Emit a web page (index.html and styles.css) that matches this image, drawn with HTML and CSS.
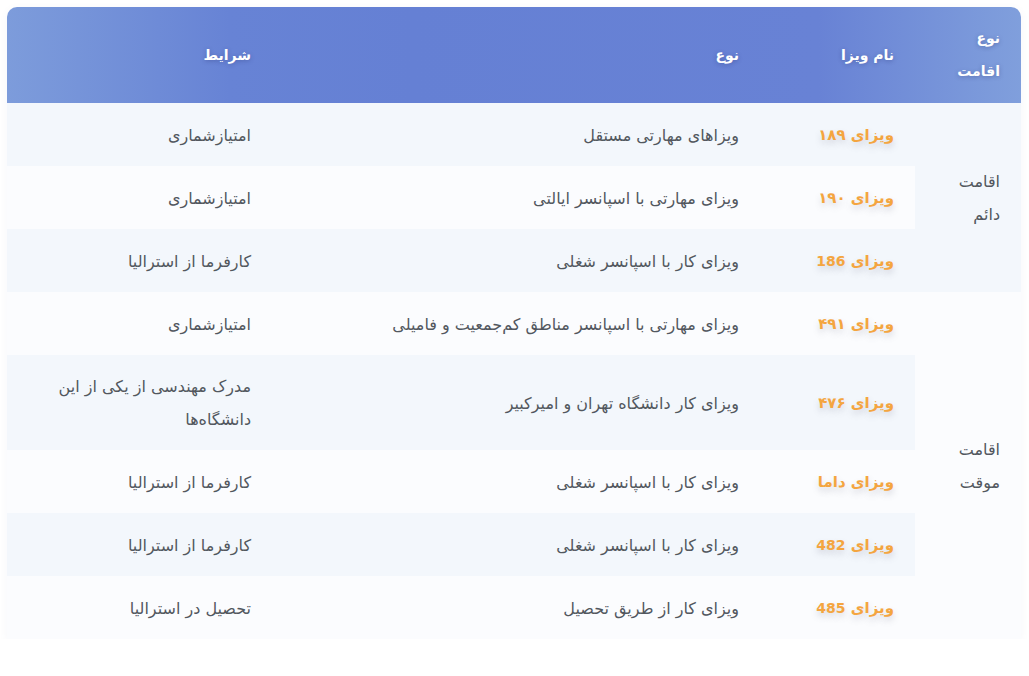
FILE: index.html
```html
<!DOCTYPE html>
<html lang="fa" dir="rtl">
<head>
<meta charset="utf-8">
<link rel="stylesheet" href="styles.css">
</head>
<body>
<div class="wrap">
<table class="visa-table">
  <thead>
    <tr>
      <th class="c-res">نوع اقامت</th>
      <th class="c-name">نام ویزا</th>
      <th class="c-type">نوع</th>
      <th class="c-cond">شرایط</th>
    </tr>
  </thead>
  <tbody>
    <tr class="odd">
      <td class="c-res group" rowspan="3">اقامت<br>دائم</td>
      <td class="c-name"><span class="visa">ویزای ۱۸۹</span></td>
      <td class="c-type">ویزاهای مهارتی مستقل</td>
      <td class="c-cond">امتیازشماری</td>
    </tr>
    <tr class="even">
      <td class="c-name"><span class="visa">ویزای ۱۹۰</span></td>
      <td class="c-type">ویزای مهارتی با اسپانسر ایالتی</td>
      <td class="c-cond">امتیازشماری</td>
    </tr>
    <tr class="odd">
      <td class="c-name"><span class="visa">ویزای <span class="lat">186</span></span></td>
      <td class="c-type">ویزای کار با اسپانسر شغلی</td>
      <td class="c-cond">کارفرما از استرالیا</td>
    </tr>
    <tr class="even">
      <td class="c-res group" rowspan="5">اقامت<br>موقت</td>
      <td class="c-name"><span class="visa">ویزای ۴۹۱</span></td>
      <td class="c-type">ویزای مهارتی با اسپانسر مناطق کم‌جمعیت و فامیلی</td>
      <td class="c-cond">امتیازشماری</td>
    </tr>
    <tr class="odd">
      <td class="c-name"><span class="visa">ویزای ۴۷۶</span></td>
      <td class="c-type">ویزای کار دانشگاه تهران و امیرکبیر</td>
      <td class="c-cond">مدرک مهندسی از یکی از این دانشگاه‌ها</td>
    </tr>
    <tr class="even">
      <td class="c-name"><span class="visa">ویزای داما</span></td>
      <td class="c-type">ویزای کار با اسپانسر شغلی</td>
      <td class="c-cond">کارفرما از استرالیا</td>
    </tr>
    <tr class="odd">
      <td class="c-name"><span class="visa">ویزای <span class="lat">482</span></span></td>
      <td class="c-type">ویزای کار با اسپانسر شغلی</td>
      <td class="c-cond">کارفرما از استرالیا</td>
    </tr>
    <tr class="even">
      <td class="c-name"><span class="visa">ویزای <span class="lat">485</span></span></td>
      <td class="c-type">ویزای کار از طریق تحصیل</td>
      <td class="c-cond">تحصیل در استرالیا</td>
    </tr>
  </tbody>
</table>
</div>
</body>
</html>
```

FILE: styles.css
```css
html, body {
  margin: 0;
  padding: 0;
  background: #ffffff;
}

body {
  font-family: "DejaVu Sans", "Noto Sans", sans-serif;
  direction: rtl;
}

.wrap {
  padding: 7px 8px 0 7px;
}

.visa-table {
  width: 1014px;
  border-collapse: separate;
  border-spacing: 0;
  table-layout: fixed;
  box-shadow: 0 2px 8px rgba(80, 100, 150, 0.06);
  border-radius: 10px 10px 0 0;
}

.visa-table th,
.visa-table td {
  text-align: right;
  vertical-align: middle;
  font-size: 16px;
  line-height: 33px;
  padding: 15px 21px 14px 21px;
}

.visa-table th {
  color: #ffffff;
  font-weight: bold;
  font-size: 14px;
  padding-top: 15px;
  padding-bottom: 15px;
  text-shadow: 0 1px 4px rgba(40, 50, 110, 0.35);
}

.visa-table thead tr {
  background: linear-gradient(to left, #809fdc 0%, #6882d5 20%, #6580d4 60%, #6783d5 78%, #7d9cdb 100%);
}

.visa-table thead th:first-child {
  border-top-right-radius: 10px;
}

.visa-table thead th:last-child {
  border-top-left-radius: 10px;
}

.visa-table th.c-res { width: 64px; }
.visa-table th.c-name { width: 113px; }
.visa-table th.c-type { width: 446px; }

.visa-table td {
  color: #52575e;
}

.odd td { background: #f3f7fc; }
.even td { background: #fbfcfe; }

.visa {
  color: #f4a540;
  font-weight: bold;
  font-size: 15px;
  text-shadow: 0 4px 6px rgba(110, 110, 130, 0.25);
}

.lat {
  font-size: 14px;
}
```
